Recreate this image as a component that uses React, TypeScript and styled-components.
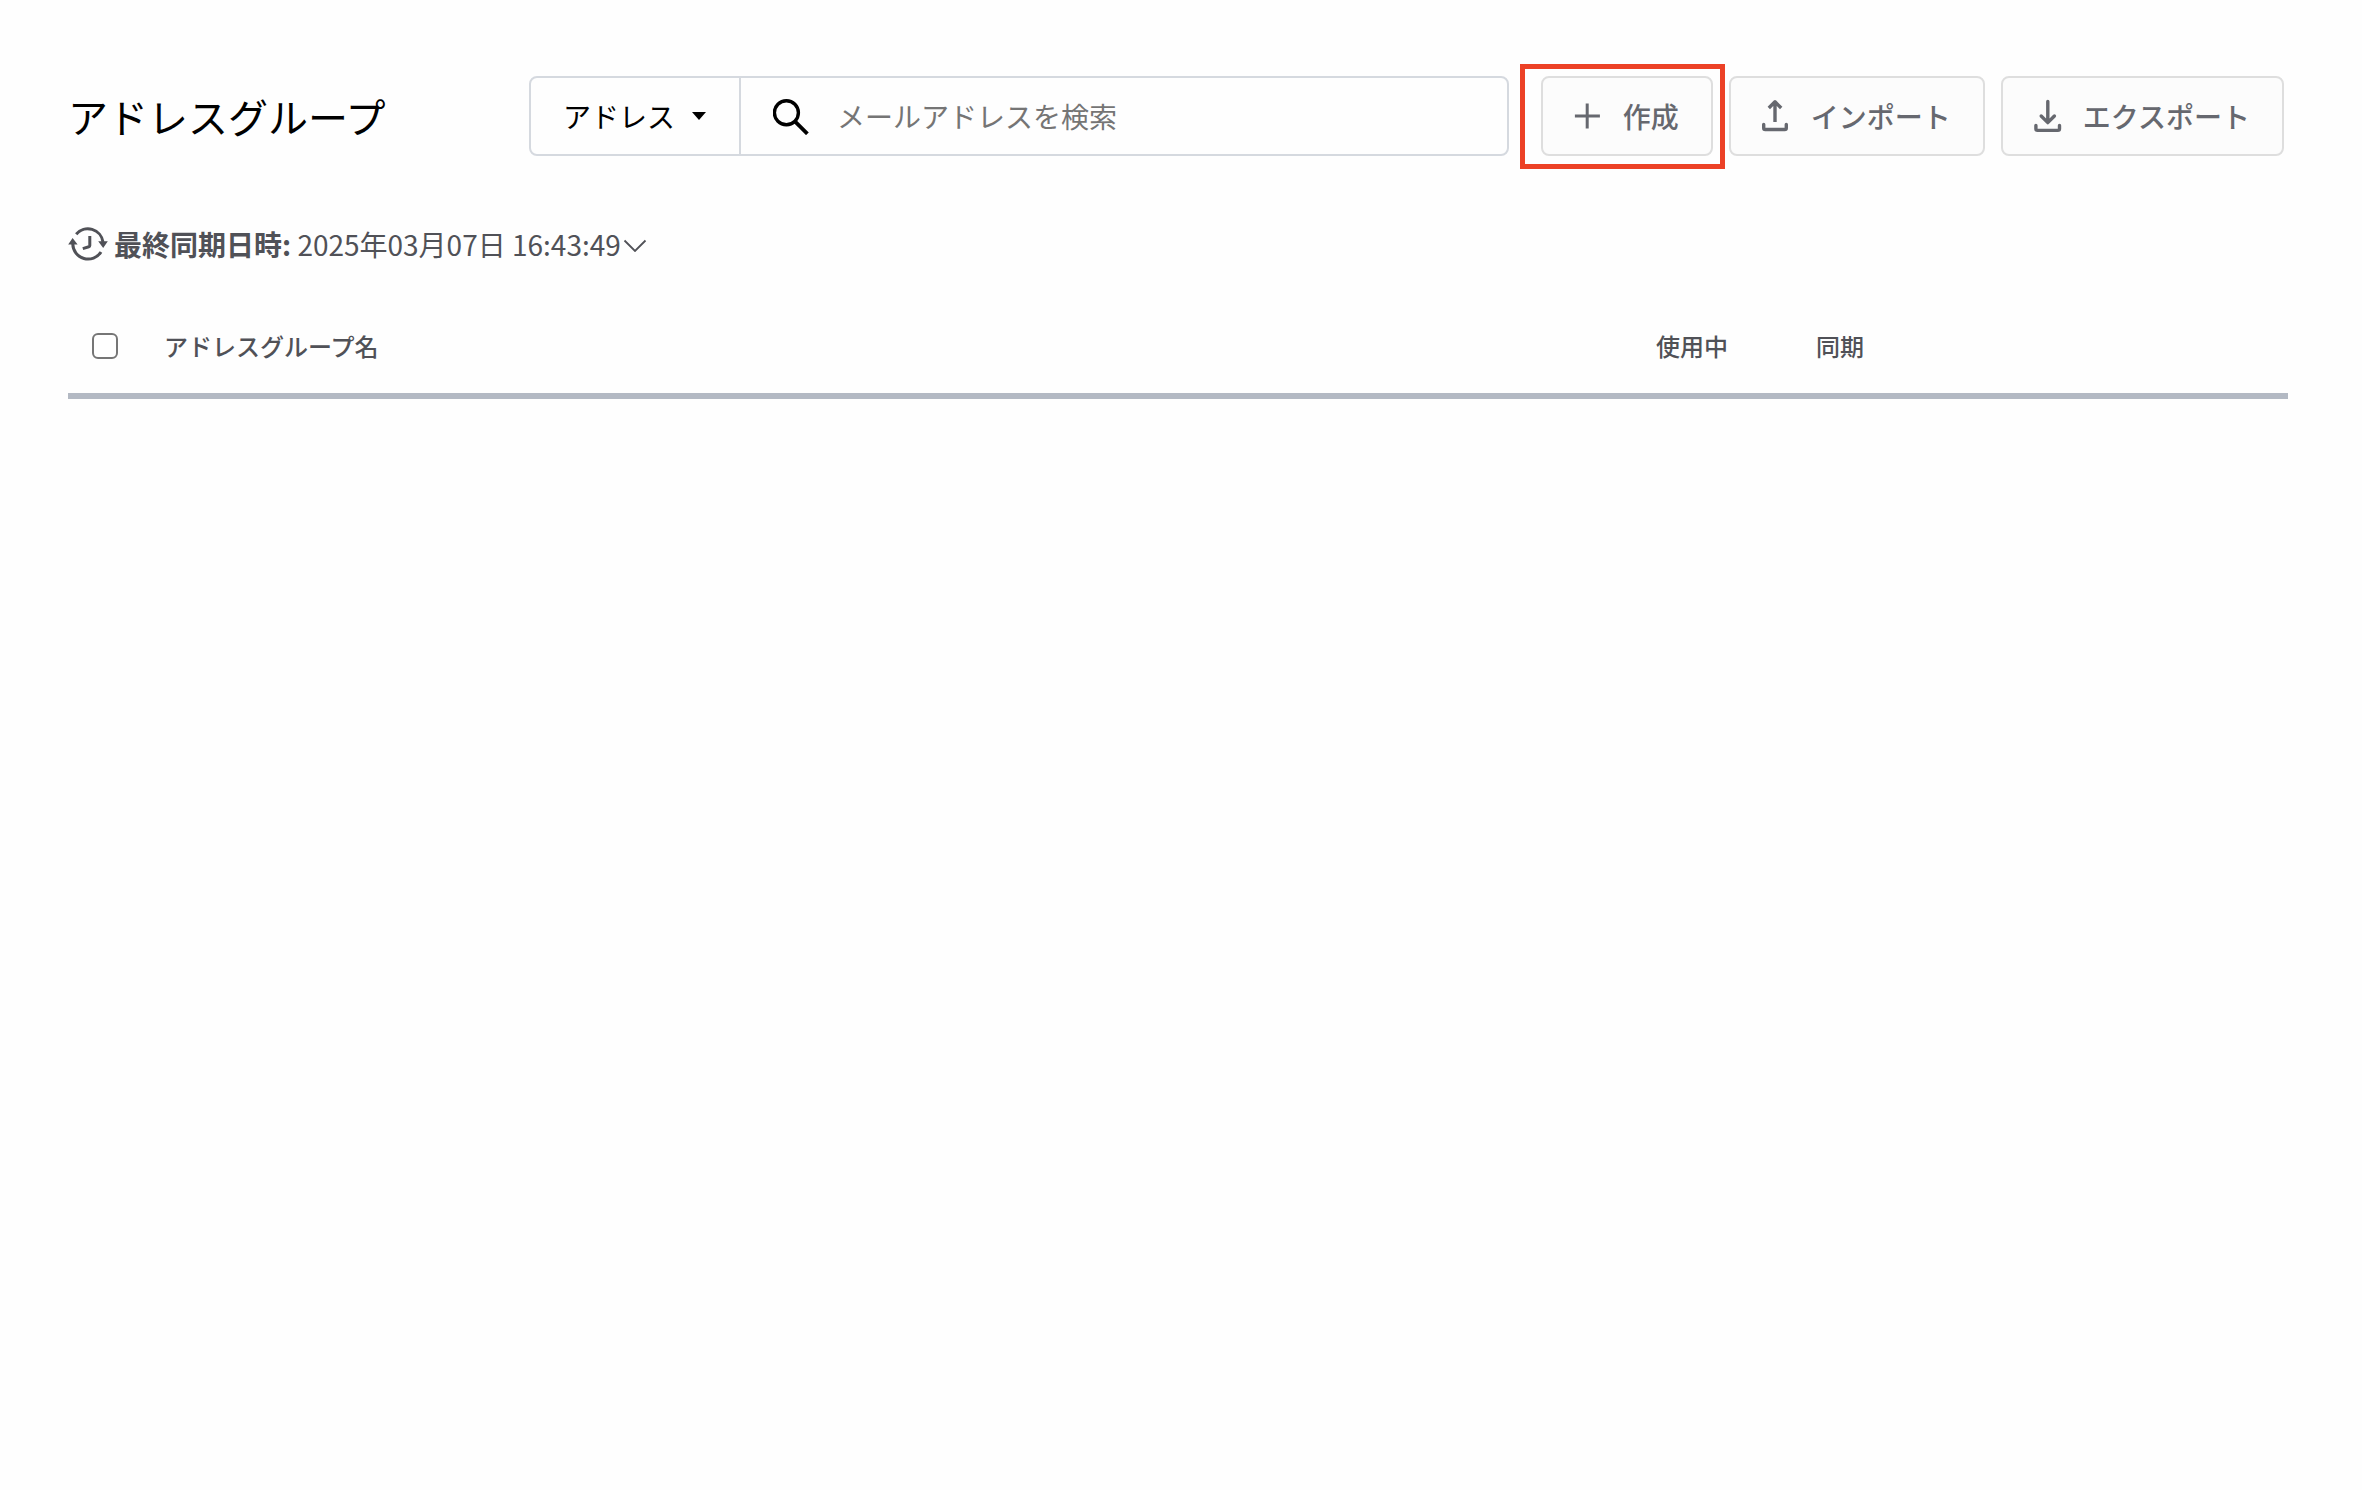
import React, { useState } from "react";
import styled, { createGlobalStyle } from "styled-components";

const GlobalStyle = createGlobalStyle`
  *, *::before, *::after { box-sizing: border-box; }
  body {
    margin: 0;
    background: #fefefe;
    color: #505157;
    font-family: "Noto Sans CJK JP", "Noto Sans", sans-serif;
  }
  button, input, select { font: inherit; color: inherit; }
`;

const Page = styled.main`
  padding: 76px 74px 76px 68px;
`;

const Header = styled.header`
  display: flex;
  align-items: center;
  padding-right: 4px;
`;

const Title = styled.h1`
  flex: 0 0 461px;
  margin: 0;
  color: #000;
  font-size: 40px;
  font-weight: 400;
  line-height: 80px;
`;

const SearchBar = styled.form`
  display: flex;
  flex: 1;
  min-width: 0;
  height: 80px;
  margin-right: 32px;
  border: 2px solid #d5d9df;
  border-radius: 8px;
`;

const SelectWrap = styled.div`
  display: flex;
  flex: 0 0 210px;
  align-items: center;
  padding-right: 33px;
  border-right: 2px solid #d5d9df;
`;

const FieldSelect = styled.select`
  flex: 1;
  min-width: 0;
  height: 100%;
  margin: 0;
  padding: 0 0 0 32px;
  border: 0;
  outline: 0;
  appearance: none;
  background: transparent;
  color: #000;
  font-size: 28px;
`;

const SearchField = styled.label`
  display: flex;
  flex: 1;
  align-items: center;
  gap: 27px;
  min-width: 0;
  padding-left: 32px;
`;

const SearchInput = styled.input`
  flex: 1;
  min-width: 0;
  height: 100%;
  padding: 0;
  border: 0;
  outline: 0;
  background: transparent;
  color: #000;
  font-size: 28px;
  &::placeholder { color: #757575; opacity: 1; }
`;

const Actions = styled.div`
  display: flex;
  gap: 16px;
`;

const ActionButton = styled.button`
  display: flex;
  align-items: center;
  gap: 21px;
  height: 80px;
  padding: 0 32px 0 31px;
  border: 2px solid #dedede;
  border-radius: 8px;
  background: #fcfcfc;
  color: #66686f;
  font-size: 28px;
  font-weight: 500;
  line-height: 40px;
  white-space: nowrap;
  cursor: pointer;
`;

const Highlighted = styled.div`
  position: relative;
  &::after {
    content: "";
    position: absolute;
    inset: -12px -12px -13px -21px;
    border: 5px solid #ec4126;
    pointer-events: none;
  }
`;

const SyncStatus = styled.div`
  display: flex;
  align-items: center;
  margin-top: 68px;
  font-size: 28px;
  line-height: 40px;
`;

const SyncText = styled.p`
  margin: 0 0 0 6px;
`;

const ExpandButton = styled.button`
  display: flex;
  padding: 0 2px;
  border: 0;
  background: transparent;
  cursor: pointer;
`;

const GroupTable = styled.table`
  width: 100%;
  margin-top: 48px;
  table-layout: fixed;
  border-collapse: collapse;
`;

const HeadCell = styled.th<{ $width?: number; $inset?: number }>`
  width: ${(p) => (p.$width ? `${p.$width}px` : "auto")};
  height: 84px;
  padding: 0 0 14px ${(p) => p.$inset ?? 0}px;
  border-bottom: 6px solid #b3b9c3;
  font-size: 24px;
  font-weight: 500;
  line-height: 36px;
  text-align: left;
  vertical-align: middle;
`;

const CheckBox = styled.input`
  display: block;
  width: 26px;
  height: 26px;
  margin: 0;
  border: 2px solid #767676;
  border-radius: 6px;
  appearance: none;
  background: #fff;
  &:checked { background: #505157; }
`;

const Caret = () => (
  <svg width="14" height="8" viewBox="0 0 14 8" aria-hidden="true">
    <path d="M0 0h14L7 8z" fill="#000" />
  </svg>
);

const SearchIcon = () => (
  <svg width="37" height="38" viewBox="0 0 37 38" fill="none" stroke="#000" strokeWidth="3.4" aria-hidden="true">
    <circle cx="13.4" cy="15.8" r="12" />
    <path d="M21.900 24.300 34.400 36.800" strokeWidth="3.8" />
  </svg>
);

const PlusIcon = () => (
  <svg width="28" height="28" viewBox="0 0 28 28" fill="none" stroke="currentColor" strokeWidth="3" aria-hidden="true">
    <path d="M13.2 1.6v25M.9 14h25" />
  </svg>
);

const TransferIcon = ({ direction }: { direction: "up" | "down" }) => (
  <svg
    width="28" height="34" viewBox="0 0 28 34" fill="none" stroke="currentColor"
    strokeWidth="3.4" strokeLinecap="round" strokeLinejoin="round" aria-hidden="true"
  >
    {direction === "up" ? (
      <path d="M13 23V3M6.8 9 13 2.8 19.2 9" strokeLinecap="butt" />
    ) : (
      <path d="M13.8 2.5v21M7.2 17l6.6 6.6 6.6-6.6" />
    )}
    <path d={direction === "up"
      ? "M1.700 25.500v3.400q0 1.600 1.600 1.600h19.400q1.600 0 1.600-1.600V25.500"
      : "M1.900 26.400v3.400q0 1.600 1.600 1.600h20.400q1.600 0 1.600-1.600V26.400"} />
  </svg>
);

const SyncIcon = () => (
  <svg width="40" height="36" viewBox="0 0 40 36" fill="none" stroke="#505157" strokeWidth="3" aria-hidden="true">
    <path d="M8.2 8.2A15.3 15.3 0 0 1 35 16" />
    <path d="M4.8 18A15.3 15.3 0 0 0 33 26" />
    <path d="M30.2 15.2h9.6L35.2 22zM.2 18.6h9.4L4.6 12z" fill="#505157" stroke="none" />
    <path d="M21.8 10v9.500q0 1-1 1.300L14.800 22.600" />
  </svg>
);

const ChevronIcon = () => (
  <svg width="24" height="16" viewBox="0 0 24 16" fill="none" stroke="#505157" strokeWidth="1.8" aria-hidden="true">
    <path d="M1.500 4.500 12 15 22.500 4.500" />
  </svg>
);

export default function App() {
  const [query, setQuery] = useState("");
  return (
    <>
      <GlobalStyle />
      <Page>
        <Header>
          <Title>アドレスグループ</Title>
          <SearchBar role="search" onSubmit={(e) => e.preventDefault()}>
            <SelectWrap>
              <FieldSelect aria-label="検索対象">
                <option>アドレス</option>
              </FieldSelect>
              <Caret />
            </SelectWrap>
            <SearchField>
              <SearchIcon />
              <SearchInput
                type="text"
                aria-label="メールアドレスを検索"
                placeholder="メールアドレスを検索"
                value={query}
                onChange={(e) => setQuery(e.target.value)}
              />
            </SearchField>
          </SearchBar>
          <Actions>
            <Highlighted>
              <ActionButton type="button"><PlusIcon />作成</ActionButton>
            </Highlighted>
            <ActionButton type="button"><TransferIcon direction="up" />インポート</ActionButton>
            <ActionButton type="button"><TransferIcon direction="down" />エクスポート</ActionButton>
          </Actions>
        </Header>
        <SyncStatus>
          <SyncIcon />
          <SyncText><strong>最終同期日時:</strong> 2025年03月07日 16:43:49</SyncText>
          <ExpandButton type="button" aria-label="同期の詳細を表示"><ChevronIcon /></ExpandButton>
        </SyncStatus>
        <GroupTable>
          <thead>
            <tr>
              <HeadCell scope="col" $width={96} $inset={24}>
                <CheckBox type="checkbox" aria-label="すべて選択" />
              </HeadCell>
              <HeadCell scope="col">アドレスグループ名</HeadCell>
              <HeadCell scope="col" $width={160}>使用中</HeadCell>
              <HeadCell scope="col" $width={472}>同期</HeadCell>
            </tr>
          </thead>
        </GroupTable>
      </Page>
    </>
  );
}
